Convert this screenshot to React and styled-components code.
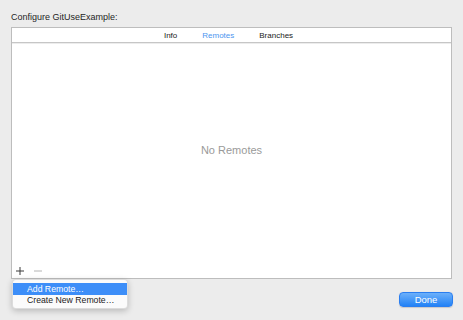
import React from "react"
import styled, { createGlobalStyle } from "styled-components"

const GlobalStyle = createGlobalStyle`
  html, body {
    margin: 0;
    padding: 0;
    background: #ececec;
    font-family: "Liberation Sans", Arial, sans-serif;
  }
`

const Sheet = styled.div`
  width: 463px;
  height: 320px;
  box-sizing: border-box;
  padding: 12px 11px 0 11px;
  display: flex;
  flex-direction: column;
  background: #ececec;
`

const Title = styled.div`
  font-size: 9px;
  line-height: 10px;
  color: #1e1e1e;
  margin-bottom: 5px;
`

const PanelWrap = styled.div`
  position: relative;
`

const Panel = styled.div`
  height: 252px;
  box-sizing: border-box;
  border: 1px solid #bdbdbd;
  background: #fff;
  display: flex;
  flex-direction: column;
`

const TabBar = styled.div`
  height: 14px;
  display: flex;
  align-items: center;
  justify-content: center;
  gap: 25px;
  padding-right: 6px;
  border-bottom: 1px solid #c6c6c6;
  box-shadow: 0 1px 0 #ececec;
`

const Tab = styled.span`
  font-size: 8px;
  color: ${(p) => (p.active ? "#4c95ef" : "#222")};
`

const Content = styled.div`
  flex: 1;
  display: flex;
  align-items: center;
  justify-content: center;
  padding-bottom: 8px;
`

const Empty = styled.span`
  font-size: 11px;
  color: #9a9a9a;
`

const Footer = styled.div`
  height: 14px;
  display: flex;
  align-items: center;
  gap: 10px;
  padding-left: 4px;
`

const IconBtn = styled.svg`
  width: 8px;
  height: 8px;
  stroke: ${(p) => (p.disabled ? "#b4b4b4" : "#3a3a3a")};
  stroke-width: 1;
`

const Menu = styled.div`
  position: absolute;
  top: 100%;
  left: 1px;
  width: 116px;
  box-sizing: border-box;
  padding: 3px 0 2px;
  background: #fbfbfb;
  border: 1px solid rgba(0, 0, 0, 0.12);
  border-radius: 4px;
  box-shadow: 0 2px 6px rgba(0, 0, 0, 0.22);
  z-index: 2;
`

const MenuItem = styled.div`
  height: 11.5px;
  display: flex;
  align-items: center;
  padding-left: 14px;
  font-size: 8.7px;
  color: ${(p) => (p.highlight ? "#fff" : "#1c1c1c")};
  background: ${(p) => (p.highlight ? "#3d8ef8" : "transparent")};
`

const Actions = styled.div`
  display: flex;
  justify-content: flex-end;
  margin-top: 13px;
  margin-right: -1px;
`

const DoneButton = styled.button`
  width: 54px;
  height: 15px;
  padding: 0;
  border: 1px solid #2a7ef0;
  border-radius: 4px;
  background: linear-gradient(#6cb0fa, #2282f6);
  color: #fff;
  font-family: "Liberation Sans", Arial, sans-serif;
  font-size: 9.5px;
  line-height: 13px;
  box-shadow: 0 0.5px 1px rgba(0, 0, 0, 0.15);
`

const App = () => {
  return (
    <Sheet>
      <GlobalStyle />
      <Title>Configure GitUseExample:</Title>
      <PanelWrap>
        <Panel>
          <TabBar>
            <Tab>Info</Tab>
            <Tab active>Remotes</Tab>
            <Tab>Branches</Tab>
          </TabBar>
          <Content>
            <Empty>No Remotes</Empty>
          </Content>
          <Footer>
            <IconBtn viewBox="0 0 8 8">
              <path d="M4 0v8M0 4h8" />
            </IconBtn>
            <IconBtn viewBox="0 0 8 8" disabled>
              <path d="M0 4h8" />
            </IconBtn>
          </Footer>
        </Panel>
        <Menu>
          <MenuItem highlight>Add Remote…</MenuItem>
          <MenuItem>Create New Remote…</MenuItem>
        </Menu>
      </PanelWrap>
      <Actions>
        <DoneButton>Done</DoneButton>
      </Actions>
    </Sheet>
  )
}

export default App
